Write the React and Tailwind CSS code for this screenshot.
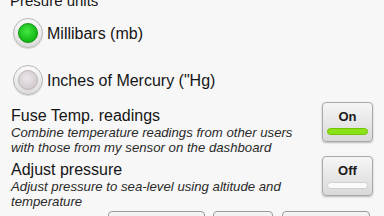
import React from "react";

function Radio({ checked, label }) {
  return (
    <div className="flex items-center h-[30px]">
      <div className="ml-[13px] w-[30px] h-[30px] rounded-full border border-[#b8b8b8] bg-gradient-to-b from-[#fafafa] to-[#dcdcdc] flex items-center justify-center shadow-[0_1px_1px_rgba(0,0,0,0.15)]">
        {checked ? (
          <div className="w-[20px] h-[20px] rounded-full bg-[radial-gradient(circle_at_45%_40%,#44e844,#14b814_70%,#0a8a0a)] border border-[#0d8f0d]" />
        ) : (
          <div className="w-[20px] h-[20px] rounded-full bg-[radial-gradient(circle_at_45%_40%,#ece6ea,#d3cbd0_70%,#c4bcc1)] border border-[#bdb5ba]" />
        )}
      </div>
      <span className="ml-[4px] text-[16px] leading-[19px] text-[#151515]">{label}</span>
    </div>
  );
}

function Toggle({ on }) {
  return (
    <div className="w-[51px] h-[40px] rounded-[4px] border border-[#a8a8a8] bg-gradient-to-b from-[#f6f6f6] to-[#d9d9d9] shadow-[0_1px_2px_rgba(0,0,0,0.25)] flex flex-col items-center">
      <span className="mt-[6px] text-[13px] leading-[16px] font-bold text-[#1a1a1a]">{on ? "On" : "Off"}</span>
      {on ? (
        <div className="mt-[3px] w-[41px] h-[7px] rounded-full bg-[#8ce218] border border-[#72c400]" />
      ) : (
        <div className="mt-[3px] w-[41px] h-[7px] rounded-full bg-[#fafafa] border border-[#cfcfcf]" />
      )}
    </div>
  );
}

function Setting({ title, lines, on, mt }) {
  return (
    <div className={`flex items-start ${mt}`}>
      <div className="ml-[11px] flex-1">
        <div className="text-[16px] leading-[19px] text-[#151515]">{title}</div>
        {lines.map((l) => (
          <div key={l} className="text-[13.2px] leading-[15px] italic text-[#2a2a2a]">{l}</div>
        ))}
      </div>
      <div className="-mt-[4px] mr-[11px]">
        <Toggle on={on} />
      </div>
    </div>
  );
}

export default function App() {
  return (
    <div
      className="w-[384px] h-[216px] overflow-hidden bg-[#f7f7f7] flex flex-col"
      style={{ fontFamily: '"Liberation Sans", Arial, sans-serif' }}
    >
      <div className="-mt-[8px] ml-[10px] text-[15px] leading-[18px] text-[#151515]">Presure units</div>
      <div className="mt-[8px]">
        <Radio checked label="Millibars (mb)" />
      </div>
      <div className="mt-[17px]">
        <Radio label={'Inches of Mercury ("Hg)'} />
      </div>
      <Setting
        mt="mt-[11px]"
        title="Fuse Temp. readings"
        lines={["Combine temperature readings from other users", "with those from my sensor on the dashboard"]}
        on
      />
      <Setting
        mt="mt-[5px]"
        title="Adjust pressure"
        lines={["Adjust pressure to sea-level using altitude and", "temperature"]}
        on={false}
      />
      <div className="flex mt-[2px]">
        <div className="ml-[108px] w-[97px] h-[20px] rounded-t-[4px] border border-[#9a9a9a] bg-gradient-to-b from-[#f6f6f6] to-[#dcdcdc]" />
        <div className="ml-[8px] w-[60px] h-[20px] rounded-t-[4px] border border-[#9a9a9a] bg-gradient-to-b from-[#f6f6f6] to-[#dcdcdc]" />
        <div className="ml-[9px] w-[88px] h-[20px] rounded-t-[4px] border border-[#9a9a9a] bg-gradient-to-b from-[#f6f6f6] to-[#dcdcdc]" />
      </div>
    </div>
  );
}
